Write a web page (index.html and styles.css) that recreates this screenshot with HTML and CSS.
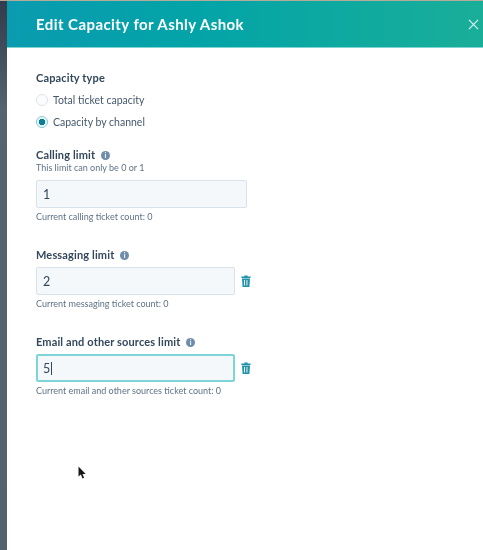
FILE: index.html
```html
<!DOCTYPE html>
<html lang="en">
<head>
    <meta charset="UTF-8">
    <title>Edit Capacity</title>
    <link rel="stylesheet" href="styles.css">
</head>
<body>
    <div class="sidebar"></div>
    <div class="panel">
        <header class="panel-header">
            <h1>Edit Capacity for Ashly Ashok</h1>
            <svg class="close" viewBox="0 0 12 12"><path d="M1 1l10 10M11 1L1 11"/></svg>
        </header>

        <main class="panel-body">
            <section class="capacity-type">
                <div class="label">Capacity type</div>
                <div class="radio-row"><span class="radio"></span>Total ticket capacity</div>
                <div class="radio-row"><span class="radio radio-on"></span>Capacity by channel</div>
            </section>

            <section class="limit limit-calling">
                <div class="label">Calling limit <span class="info">i</span></div>
                <div class="hint">This limit can only be 0 or 1</div>
                <div class="input-row">
                    <div class="input input-wide">1</div>
                </div>
                <div class="hint">Current calling ticket count: 0</div>
            </section>

            <section class="limit">
                <div class="label">Messaging limit <span class="info">i</span></div>
                <div class="input-row">
                    <div class="input">2</div>
                    <svg class="trash" viewBox="0 0 10 12"><path d="M3.4 1.6V.5h3.2v1.1h3v1.3H.4V1.6zM1 3.6h8l-.6 8.4H1.6zM3 5v5.6h.9V5zm2.5 0v5.6h.9V5z" fill-rule="evenodd"/></svg>
                </div>
                <div class="hint">Current messaging ticket count: 0</div>
            </section>

            <section class="limit">
                <div class="label">Email and other sources limit <span class="info">i</span></div>
                <div class="input-row">
                    <div class="input input-focus">5<span class="caret"></span></div>
                    <svg class="trash" viewBox="0 0 10 12"><path d="M3.4 1.6V.5h3.2v1.1h3v1.3H.4V1.6zM1 3.6h8l-.6 8.4H1.6zM3 5v5.6h.9V5zm2.5 0v5.6h.9V5z" fill-rule="evenodd"/></svg>
                </div>
                <div class="hint">Current email and other sources ticket count: 0</div>
            </section>
        </main>

        <svg class="cursor" viewBox="0 0 9 13"><path d="M.5.5v10l2.4-2 1.6 4 1.6-.7-1.6-3.8h3.2z"/></svg>
    </div>
</body>
</html>
```

FILE: styles.css
```css
body {
    margin: 0;
    display: flex;
    height: 550px;
    overflow: hidden;
    background: #fff;
    color: #33475b;
    font-family: "Lato", sans-serif;
    border-top: 1px solid #b5ab98;
    box-sizing: border-box;
    filter: blur(0.35px);
}

.sidebar {
    width: 7px;
    flex-shrink: 0;
    background: linear-gradient(#2f3d4c, #55636f 20%, #54626f);
}

.panel {
    flex: 1;
    position: relative;
    background: #fff;
}

.panel-header {
    height: 47px;
    display: flex;
    align-items: center;
    justify-content: space-between;
    padding: 0 4px 0 29px;
    background: linear-gradient(90deg, #0a9bb0, #03a4a8 40%, #19ae98);
    border-bottom: 1px solid #7fd3d0;
    box-sizing: border-box;
}

.panel-header h1 {
    margin: 0;
    font-size: 15px;
    font-weight: 700;
    letter-spacing: 0.43px;
    color: #fff;
}

.close {
    width: 11px;
    height: 11px;
    fill: none;
    stroke: #e6f7f5;
    stroke-width: 1.2;
}

.panel-body {
    padding: 23px 0 0 29px;
}

.label {
    font-size: 11px;
    font-weight: 700;
    line-height: 14px;
    letter-spacing: 0.14px;
    color: #33475b;
}

.capacity-type .label {
    margin-bottom: 4px;
}

.radio-row {
    display: flex;
    align-items: center;
    gap: 5px;
    height: 22px;
    font-size: 10.5px;
    color: #45586b;
}

.radio {
    width: 10px;
    height: 10px;
    border: 1px solid #dfe3eb;
    border-radius: 50%;
    background: #fbfcfd;
}

.radio-on {
    border-color: #7fc8d2;
    background: radial-gradient(circle, #0b7f95 0 3px, #f2f9fa 3.6px);
}

.limit {
    margin-top: 25px;
}

.limit-calling {
    margin-top: 15px;
}

.limit-calling .input-row {
    margin-top: 6px;
}

.info {
    display: inline-block;
    width: 9px;
    height: 9px;
    margin: 0 0 2px 3px;
    border-radius: 50%;
    background: #6f8dab;
    color: #fff;
    font-size: 7px;
    font-weight: 700;
    line-height: 9px;
    text-align: center;
    vertical-align: middle;
}

.hint {
    font-size: 9px;
    line-height: 12px;
    color: #5f7287;
}

.input-row {
    display: flex;
    align-items: center;
    gap: 6px;
    margin: 5px 0 3px;
}

.input {
    width: 199px;
    height: 28px;
    padding: 0 6px;
    display: flex;
    align-items: center;
    background: #f5f8fa;
    border: 1px solid #d9e2ea;
    border-radius: 2px;
    font-size: 12.5px;
    color: #33475b;
    box-sizing: border-box;
}

.input-wide {
    width: 211px;
}

.input-focus {
    border: 2px solid #7fd4da;
    padding: 0 5px;
}

.caret {
    width: 1px;
    height: 13px;
    margin-left: 1px;
    background: #33475b;
}

.trash {
    width: 10px;
    height: 12px;
    fill: #1f93a8;
}

.cursor {
    position: absolute;
    left: 71px;
    top: 465px;
    width: 9px;
    height: 13px;
    fill: #15181c;
}
```
